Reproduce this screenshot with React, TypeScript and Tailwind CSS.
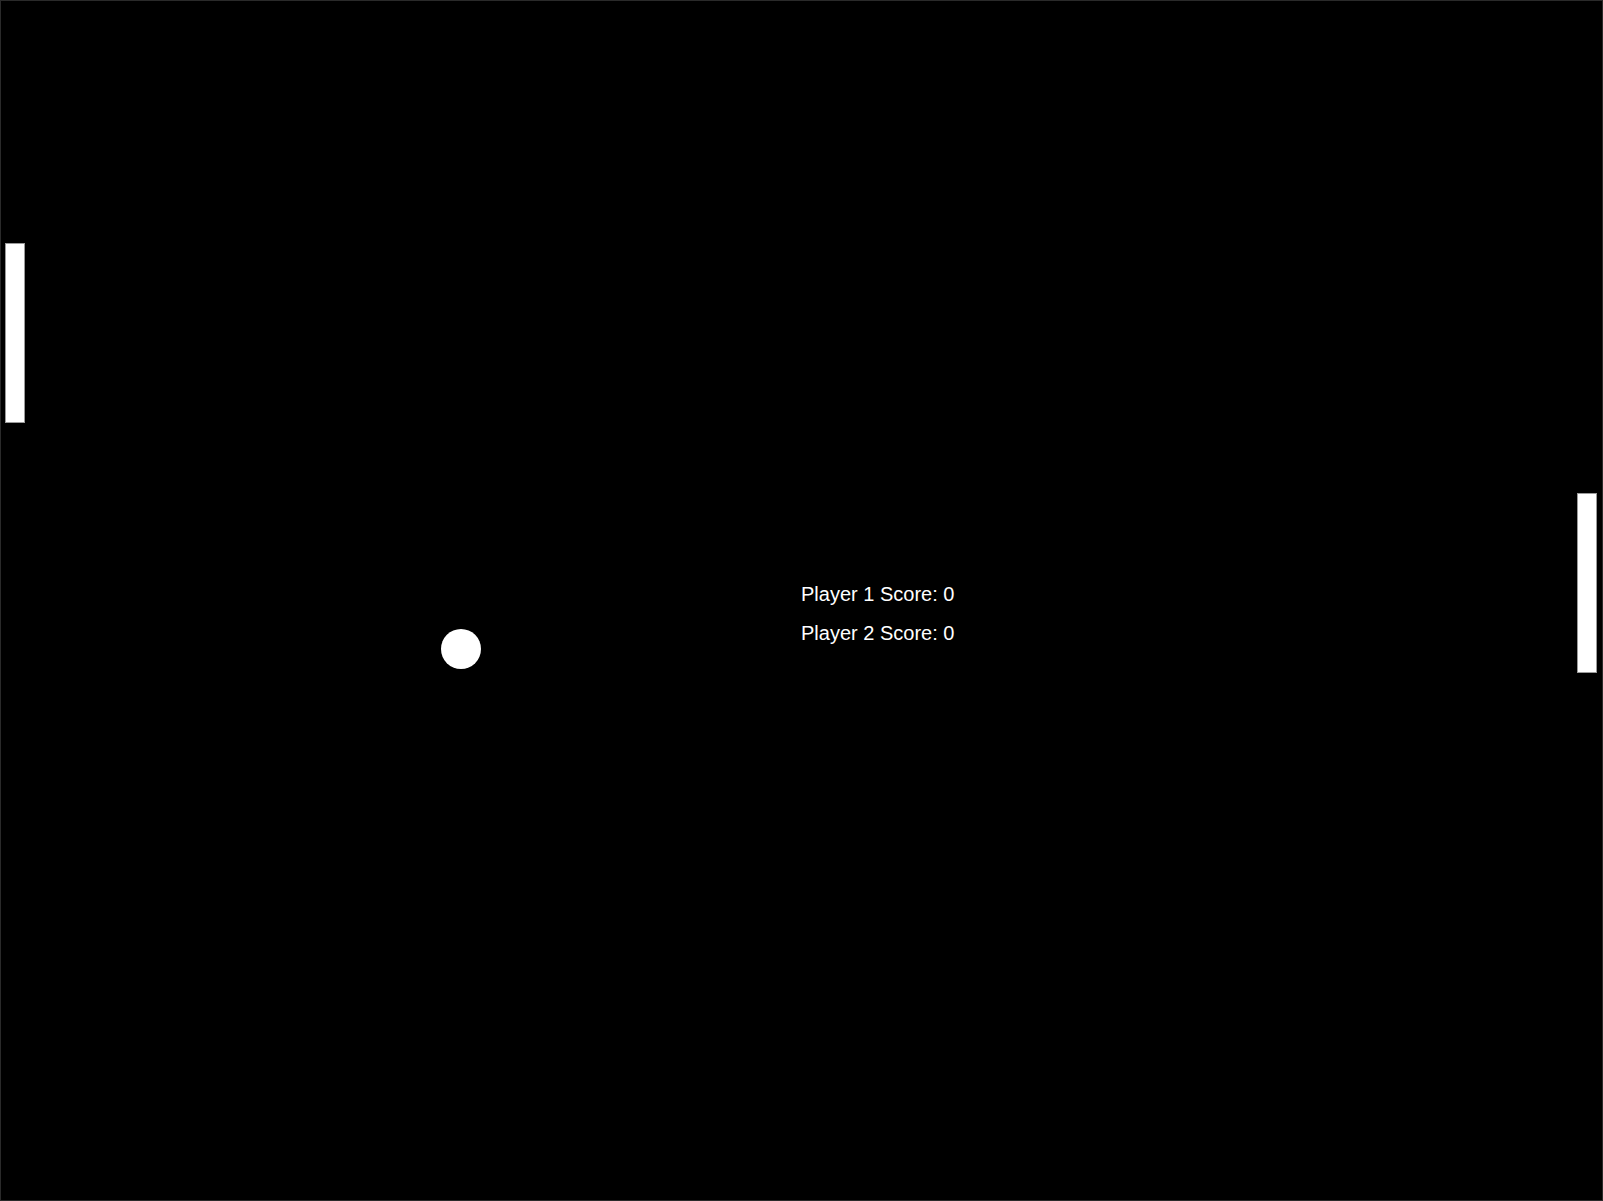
const App = () => {
  const paddles = [
    { id: "p1", className: "left-[4px] top-[242px]" },
    { id: "p2", className: "left-[1576px] top-[492px]" },
  ];

  return (
    <div className="relative h-[1201px] w-[1603px] overflow-hidden border border-[#2a2a2a] bg-black">
      {/* paddles */}
      {paddles.map((p) => (
        <div
          key={p.id}
          className={`absolute h-[180px] w-[20px] border border-[#9a9a9a] bg-white ${p.className}`}
        />
      ))}

      {/* ball */}
      <div className="absolute left-[440px] top-[628px] h-[40px] w-[40px] rounded-full bg-white" />

      {/* score */}
      <div
        className="absolute left-[800px] top-[582px] flex flex-col gap-4 text-[20px] leading-[23px] text-white"
        style={{ fontFamily: '"Liberation Sans", Arial, sans-serif' }}
      >
        <div>Player 1 Score: 0</div>
        <div>Player 2 Score: 0</div>
      </div>
    </div>
  );
};

export default App;
